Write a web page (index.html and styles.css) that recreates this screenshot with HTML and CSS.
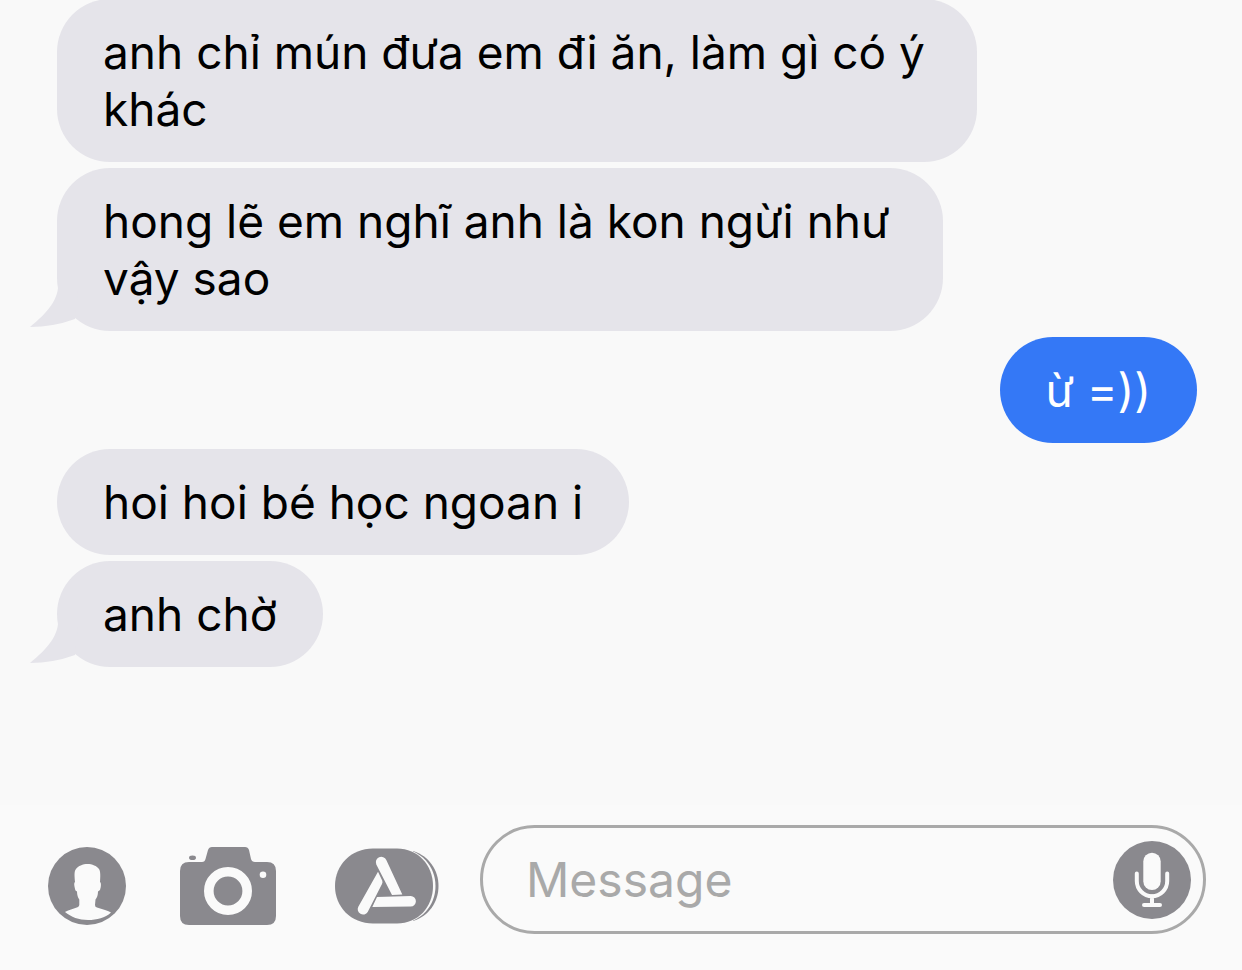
FILE: index.html
```
<!DOCTYPE html>
<html lang="vi">
<head>
    <meta charset="utf-8">
    <meta name="viewport" content="width=device-width, initial-scale=1">
    <title>Messages</title>
    <link rel="stylesheet" href="styles.css">
</head>
<body>
    <main class="chat">
        <p class="bubble received">anh chỉ mún đưa em đi ăn, làm gì có ý khác</p>
        <p class="bubble received narrow tail">hong lẽ em nghĩ anh là kon ngừi như vậy sao</p>
        <p class="bubble sent">ừ =))</p>
        <p class="bubble received">hoi hoi bé học ngoan i</p>
        <p class="bubble received tail">anh chờ</p>
    </main>

    <form class="composer">
        <div class="tools">
            <button type="button" aria-label="Contact">
                <svg width="78" height="78" viewBox="0 0 78 78">
                    <circle cx="39" cy="39" r="39" fill="#8a898e"/>
                    <path fill="#fafafa" d="M39.500 17C44 17 49 19 51 22C52.500 24 52.500 29 52 35C53.500 36 53 40 52 43L50 44.500C50 48 49 51 47.500 52.500L47 58Q47 60 49 60.500L57 63Q61 64 63 65.500C57 71 49 73 40 73C31 73 23 70 17 65Q19 63.500 23 62.500L29.500 60.300Q31.300 59.500 31.300 58V52.500C30 51 29 48 29 44.500L27.500 43.500C26.500 40 25.500 36 27 35C26.500 29 26 24 28 22C30 19 35 17 39.500 17Z"/>
                </svg>
            </button>
            <button type="button" aria-label="Camera">
                <svg width="96" height="78" viewBox="0 0 96 78">
                    <path fill="#8a898e" d="M9 15H22C24 15 25 14 25.500 12L28 3Q29 0 32 0H65Q68 0 69 3L71 12C71.500 14 73 15 75 15H87Q96 15 96 24V69Q96 78 87 78H9Q0 78 0 69V24Q0 15 9 15Z"/>
                    <ellipse cx="12.500" cy="10.700" rx="3.500" ry="2.300" fill="#8a898e"/>
                    <circle cx="48" cy="44" r="19.200" fill="none" stroke="#fafafa" stroke-width="9.600"/>
                    <circle cx="83" cy="27.700" r="3.300" fill="#fafafa"/>
                </svg>
            </button>
            <button type="button" class="apps" aria-label="Apps">
                <svg width="104" height="76" viewBox="0 0 104 76">
                    <path fill="#8a898e" d="M78 3C94 8 103.500 22 103.500 38S94 68 78 73Z"/>
                    <path fill="#fafafa" d="M65 0C86 2 100.500 18 100.500 38S86 74 65 76Z"/>
                    <path fill="#8a898e" d="M38 .500H62C83 .500 98 17 98 38S83 75.500 62 75.500H38C16 75.500 0 59 0 38S16 .500 38 .500Z"/>
                    <g fill="#fafafa">
                        <path d="M41.300 16.500A5.400 5.400 0 0 1 51.300 12L67.300 46.500L57 47Z"/>
                        <path d="M43 23.700L47.300 32.700Q47.800 34.500 47 36L32.700 64A5.400 5.400 0 0 1 23.300 58.700Z"/>
                        <path d="M42 49L75.700 48A5.200 5.200 0 0 1 75.700 58.400L37.300 59Z"/>
                    </g>
                </svg>
            </button>
        </div>
        <div class="field">
            <input type="text" placeholder="Message" aria-label="Message">
            <button type="button" aria-label="Dictate">
                <svg width="78" height="78" viewBox="0 0 78 78">
                    <circle cx="39" cy="39" r="39" fill="#8a898e"/>
                    <rect x="30.300" y="11.700" width="17.400" height="37.300" rx="8.700" fill="#fafafa"/>
                    <path fill="none" stroke="#fafafa" stroke-width="4" stroke-linecap="round" d="M23.800 32.500V40A15.200 15.200 0 0 0 54.200 40V32.500M39 55V64M31 64H47"/>
                </svg>
            </button>
        </div>
    </form>
</body>
</html>
```
FILE: styles.css
```
* {
    box-sizing: border-box;
}

body {
    display: flex;
    flex-direction: column;
    height: 100vh;
    margin: 0;
    background: #f9f9f9;
    color: #000;
    font-family: Inter, "Liberation Sans", sans-serif;
    font-size: 46px;
    line-height: 57px;
}

/* messages stick to the bottom, older ones run off the top */
.chat {
    flex: 1;
    min-height: 0;
    display: flex;
    flex-direction: column;
    justify-content: flex-end;
    gap: 6px;
    padding: 0 45px 138px 57px;
    overflow: hidden;
}

.bubble {
    position: relative;
    flex-shrink: 0;
    max-width: 920px;
    margin: 0;
    padding: 25px 46px 24px;
    border-radius: 53px;
}

.received {
    align-self: flex-start;
    background: #e5e4ea;
}

.sent {
    align-self: flex-end;
    background: #3478f6;
    color: #fff;
}

.narrow {
    max-width: 886px;
}

.tail::before {
    content: "";
    position: absolute;
    left: -28px;
    bottom: 0;
    width: 50px;
    height: 50px;
    background: #e5e4ea;
    clip-path: path("M29 0C31 18 18 32 1 46Q24 46 46 38L50 0Z");
}

.composer {
    display: flex;
    align-items: flex-end;
    gap: 41px;
    padding: 20px 36px 36px 48px;
    background: #fafafa;
}

.tools {
    display: flex;
    align-items: center;
    gap: 54px;
    padding-bottom: 9px;
}

button {
    padding: 0;
    border: 0;
    background: none;
    cursor: pointer;
}

button svg {
    display: block;
}

.apps {
    padding-left: 5px;
}

.field {
    flex: 1;
    min-width: 0;
    display: flex;
    align-items: center;
    height: 109px;
    padding: 0 12px 0 43px;
    border: 3px solid #a9a9a9;
    border-radius: 55px;
}

.field input {
    flex: 1;
    min-width: 0;
    padding: 0;
    border: 0;
    outline: none;
    background: none;
    font: inherit;
    font-size: 48px;
}

.field input::placeholder {
    color: #a9a9a9;
}
```
